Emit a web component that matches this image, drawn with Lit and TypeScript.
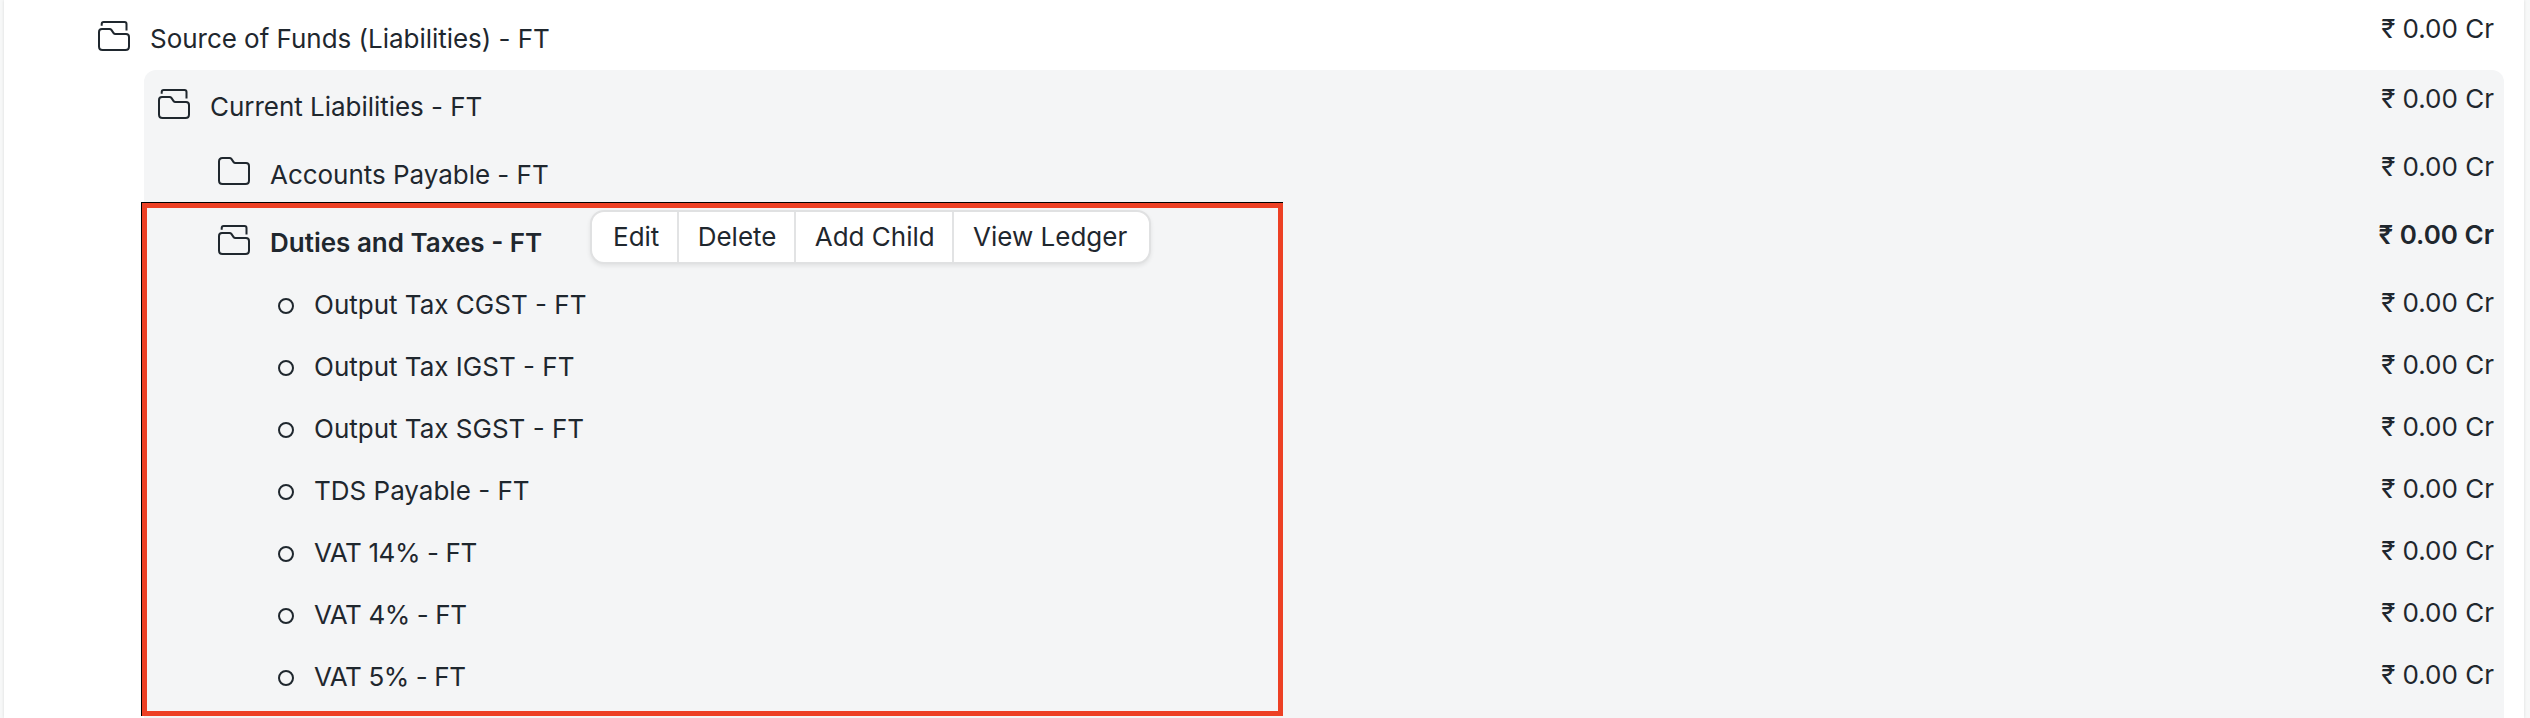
import { LitElement, html, css, svg } from "lit";
import { customElement } from "lit/decorators.js";

type Kind = "open" | "closed" | "leaf";
interface Account { name: string; kind: Kind; level: number; active?: boolean }

const leaf = (name: string): Account => ({ name, kind: "leaf", level: 3 });

const accounts: Account[] = [
  { name: "Current Liabilities - FT", kind: "open", level: 1 },
  { name: "Accounts Payable - FT", kind: "closed", level: 2 },
  { name: "Duties and Taxes - FT", kind: "open", level: 2, active: true },
  leaf("Output Tax CGST - FT"),
  leaf("Output Tax IGST - FT"),
  leaf("Output Tax SGST - FT"),
  leaf("TDS Payable - FT"),
  leaf("VAT 14% - FT"),
  leaf("VAT 4% - FT"),
  leaf("VAT 5% - FT"),
];
const actions = ["Edit", "Delete", "Add Child", "View Ledger"];

const openIcon = html`<svg class="icon" width="32" height="30" viewBox="0 0 32 30">${svg`
  <path d="M3.7 4.8V3Q3.7 1 5.7 1H26.500Q28.500 1 28.500 3V9.500M1 11Q1 8 4 8H11.500Q12.700 8 13.400 8.900L15.600 12.100Q16.200 13 17.400 13H28Q31 13 31 16V25.500Q31 29 27.500 29H4.500Q1 29 1 25.500Z"/>`}</svg>`;
const closedIcon = html`<svg class="icon" width="32" height="28" viewBox="0 0 32 28">${svg`
  <path d="M1 4.500Q1 1 4.500 1H11.500Q12.700 1 13.400 1.900L15.600 5.100Q16.200 6 17.400 6H28Q31 6 31 9V23.500Q31 27 27.500 27H4.500Q1 27 1 23.500Z"/>`}</svg>`;
const leafIcon = html`<svg class="icon" width="16" height="16" viewBox="0 0 16 16"><circle cx="8" cy="8" r="7"/></svg>`;
const icons = { open: openIcon, closed: closedIcon, leaf: leafIcon };

@customElement("app-root")
export class AppRoot extends LitElement {
  static styles = css`
    :host { display: block; height: 718px; overflow: hidden; background: #f7f8f8;
      font: 26px/32px Inter, sans-serif; color: #1f272e; }
    .page { box-sizing: border-box; height: 718px; margin: 0 6px 0 4px; padding: 0 20px 0 0;
      background: #fff; box-shadow: 0 0 3px rgba(0,0,0,.12); }
    .panel { margin-left: 140px; height: 648px; background: #f4f5f6; border-radius: 12px 12px 0 0; }
    .row { box-sizing: border-box; height: 68px; display: flex; align-items: flex-start; padding-right: 10px; white-space: nowrap; }
    .root { height: 70px; padding-left: 94px; }
    .level1 { padding-left: 14px; }
    .level2 { padding-left: 74px; }
    .level3 { padding-left: 134px; height: 62px; }
    .icon { flex: none; fill: none; stroke: currentColor; stroke-width: 2; margin: 19px 20px 0 0; }
    .root .icon { margin-top: 21px; }
    .level3 .icon { margin: 24px 20px 0 0; }
    .name { margin-top: 21px; letter-spacing: -0.03px; }
    .root .name { margin-top: 23px; }
    .level3 .name { margin-top: 15px; letter-spacing: 0; }
    .level3 .name.rate { letter-spacing: -0.4px; }
    .amount { margin: 13px 0 0 auto; }
    .active .name, .active .amount { font-weight: 600; }
    .active .name { width: 272px; letter-spacing: 0; }
    .actions { display: flex; margin: 4px 0 0 48px; height: 54px; box-sizing: border-box;
      border: 2px solid #e0e1e2; border-radius: 14px; background: #fff; box-shadow: 0 2px 4px rgba(0,0,0,.08); }
    .action { padding: 9px 17.3px 0 19px; border-left: 2px solid #e2e3e4; }
    .action:first-child { border-left: 0; padding-left: 21px; }
    .action:last-child { padding-right: 22px; }
    .marker { position: absolute; box-sizing: border-box; left: 141px; top: 202px; width: 1142px; height: 514px;
      border: 1px solid #000; border-width: 1px 0 0 1px; }
    .marker-line { box-sizing: border-box; height: 513px; border: 5px solid #ed4024; }
  `;

  row(a: Account) {
    return html`<div class="row level${a.level} ${a.active ? "active" : ""}">
      ${icons[a.kind]}<span class="name ${a.name.includes("%") ? "rate" : ""}">${a.name}</span>
      ${a.active ? html`<div class="actions">${actions.map((t) => html`<span class="action">${t}</span>`)}</div>` : ""}
      <span class="amount">₹ 0.00 Cr</span></div>`;
  }

  render() {
    return html`<main class="page">
      <div class="row root">${openIcon}<span class="name">Source of Funds (Liabilities) - FT</span><span class="amount">₹ 0.00 Cr</span></div>
      <section class="panel">${accounts.map((a) => this.row(a))}</section>
      <div class="marker"><div class="marker-line"></div></div>
    </main>`;
  }
}
